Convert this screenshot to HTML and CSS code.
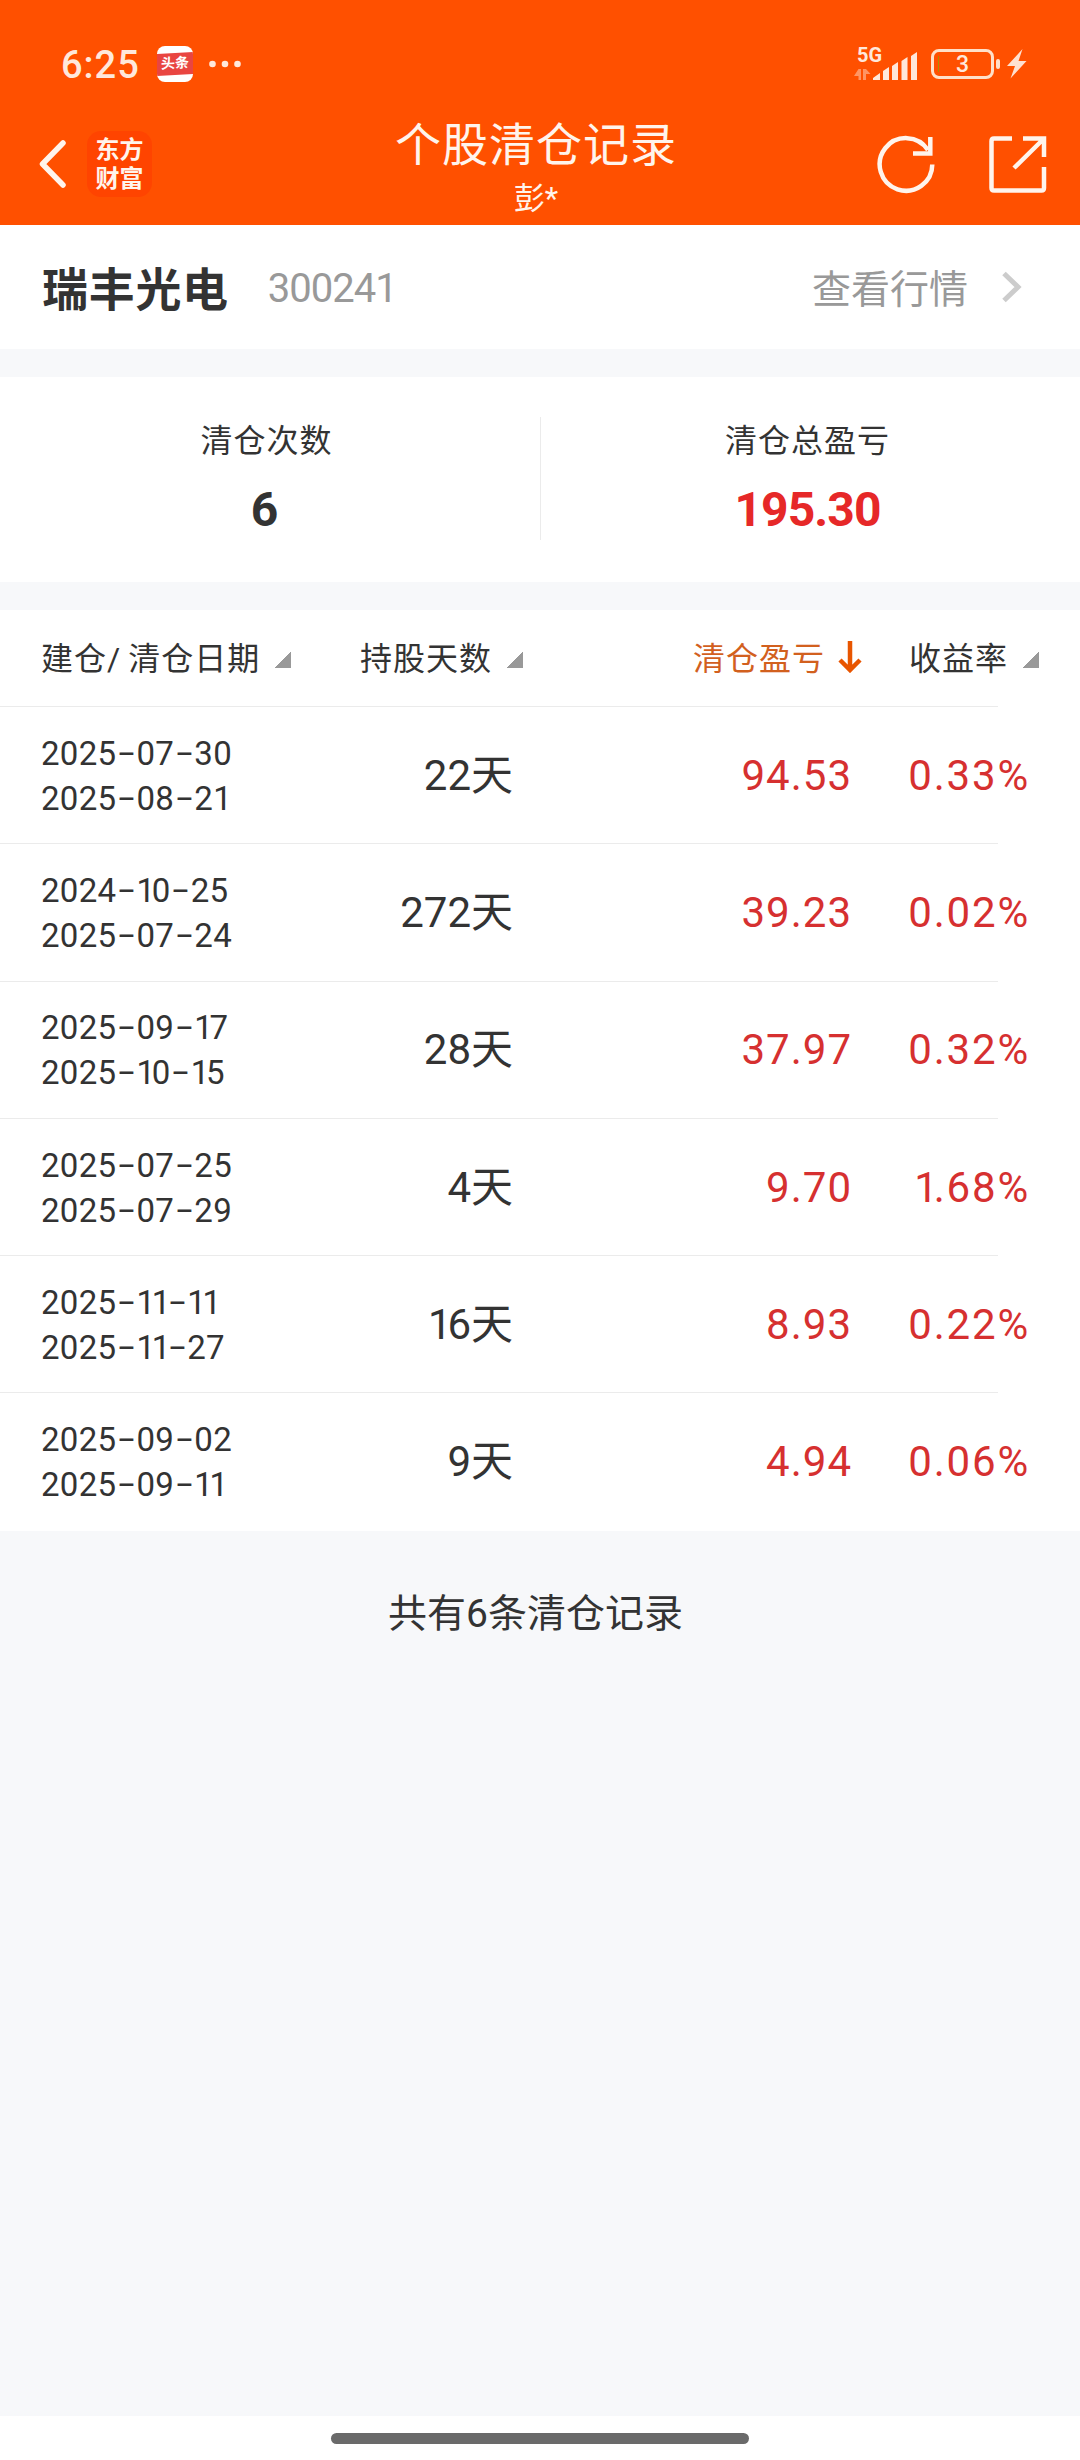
FILE: index.html
```
<!DOCTYPE html>
<html lang="zh-CN">
<head>
	<meta charset="UTF-8">
	<title>个股清仓记录</title>
	<link rel="stylesheet" href="styles.css">
</head>
<body>
	<div id="header">
		<div class="status">
			<span class="time">6:25</span>
			<span class="app"><b>头条</b></span>
			<svg class="dots" width="32" height="8" viewBox="0 0 32 8" fill="#ffe8db">
				<circle cx="3.5" cy="4" r="3.3"/><circle cx="16" cy="4" r="3.3"/><circle cx="28.5" cy="4" r="3.3"/>
			</svg>
			<div class="signal">
				<span class="net">5G</span>
				<svg width="64" height="34" viewBox="0 0 64 34" fill="#ffe8db">
					<path opacity=".45" d="M4.500 22H7V33H4.500V29H0zM9 22h3l4.500 5H12v6H9z"/>
					<path d="M19 33v-2l7-5v7zM29 33v-9l6-4v13zM38 33v-14l6-4v18zM47.500 33v-19l6-4v23zM57 33v-24l6-4v28z"/>
				</svg>
			</div>
			<div class="battery">3</div>
			<svg class="bolt" width="20" height="30" viewBox="0 0 20 30" fill="#ffe0d0">
				<path d="M15.500 0L0 17h8L3.500 29.500L19.500 12h-8z"/>
			</svg>
		</div>
		<div class="bar">
			<svg class="back" width="30" height="50" viewBox="0 0 30 50">
				<path d="M25 4L4.500 25L25 46" fill="none" stroke="#fff4ec" stroke-width="5.500" stroke-linecap="round" stroke-linejoin="round"/>
			</svg>
			<div class="logo">东方<br>财富</div>
			<div class="title">
				<h1>个股清仓记录</h1>
				<p>彭*</p>
			</div>
			<svg class="refresh" width="60" height="60" viewBox="0 0 60 60" fill="none" stroke="#fff4ec" stroke-width="4.500">
				<path d="M56.300 30.500A26.300 26.300 0 1 1 52 16"/>
				<path d="M54.300 3V19.500H37"/>
			</svg>
			<svg class="share" width="60" height="60" viewBox="0 0 60 60" fill="none" stroke="#fff4ec" stroke-width="4.500">
				<path d="M25 4.500H7Q4.500 4.500 4.500 7V54Q4.500 56.500 7 56.500H54.500Q57 56.500 57 54V33"/>
				<path d="M36 4.500H57V23M56 5.500L27 34"/>
			</svg>
		</div>
	</div>

	<div id="stock">
		<b>瑞丰光电</b>
		<span class="code">300241</span>
		<span class="link">查看行情</span>
		<svg width="22" height="32" viewBox="0 0 22 32"><path d="M3 2.500L17 16L3 29.500" fill="none" stroke="#ccc" stroke-width="5"/></svg>
	</div>

	<div id="summary">
		<div class="item"><p>清仓次数</p><b>6</b></div>
		<div class="item"><p>清仓总盈亏</p><b class="red">195.30</b></div>
	</div>

	<div id="list">
		<div class="row head">
			<div class="date">建仓/ 清仓日期<i class="tri"></i></div>
			<div class="days">持股天数<i class="tri"></i></div>
			<div class="profit active">清仓盈亏<svg width="24" height="32" viewBox="0 0 24 32"><path d="M12 0V28M2 19L12 29L22 19" fill="none" stroke="#e85500" stroke-width="4.500"/></svg></div>
			<div class="rate">收益率<i class="tri"></i></div>
		</div>
		<div class="row">
			<div class="date">2025<i>-</i>07<i>-</i>30<br>2025<i>-</i>08<i>-</i>21</div>
			<div class="days">22天</div><div class="profit">94.53</div><div class="rate">0.33%</div>
		</div>
		<div class="row">
			<div class="date">2024<i>-</i><em>1</em>0<i>-</i>25<br>2025<i>-</i>07<i>-</i>24</div>
			<div class="days">272天</div><div class="profit">39.23</div><div class="rate">0.02%</div>
		</div>
		<div class="row">
			<div class="date">2025<i>-</i>09<i>-</i><em>1</em>7<br>2025<i>-</i><em>1</em>0<i>-</i><em>1</em>5</div>
			<div class="days">28天</div><div class="profit">37.97</div><div class="rate">0.32%</div>
		</div>
		<div class="row">
			<div class="date">2025<i>-</i>07<i>-</i>25<br>2025<i>-</i>07<i>-</i>29</div>
			<div class="days">4天</div><div class="profit">9.70</div><div class="rate"><em>1</em>.68%</div>
		</div>
		<div class="row">
			<div class="date">2025<i>-</i><em>11</em><i>-</i><em>11</em><br>2025<i>-</i><em>11</em><i>-</i>27</div>
			<div class="days"><em>1</em>6天</div><div class="profit">8.93</div><div class="rate">0.22%</div>
		</div>
		<div class="row">
			<div class="date">2025<i>-</i>09<i>-</i>02<br>2025<i>-</i>09<i>-</i><em>11</em></div>
			<div class="days">9天</div><div class="profit">4.94</div><div class="rate">0.06%</div>
		</div>
	</div>

	<div id="total">共有6条清仓记录</div>
	<div id="home"><span></span></div>
</body>
</html>
```
FILE: styles.css
```
*{
	box-sizing: border-box;
	margin: 0;
	padding: 0;
}

body{
	display: flex;
	flex-direction: column;
	height: 2460px;
	background: #f7f8fa;
	color: #333;
	font-family: Roboto, "Noto Sans CJK SC", sans-serif;
	white-space: nowrap;
}

svg{
	display: block;
	flex: none;
}

i, em{
	font-style: normal;
}

/* header */
#header{
	height: 225px;
	background: #ff5000;
	color: #fff4ec;
}

#header .status{
	display: flex;
	align-items: center;
	height: 128px;
	padding: 0 53px 0 61px;
}

#header .time{
	width: 96px;
	padding-top: 2px;
	color: #ffe8db;
	font-size: 38px;
	font-weight: 500;
	letter-spacing: 1px;
}

#header .app{
	display: flex;
	align-items: center;
	width: 36px;
	height: 36px;
	overflow: hidden;
	border-radius: 8px;
	background: #fff;
}

#header .app b{
	width: 36px;
	height: 22px;
	background: #e94541;
	color: #fff;
	font-size: 14px;
	line-height: 21px;
	text-align: center;
	transform: skewY(-3deg);
}

#header .dots{
	margin-left: 16px;
}

#header .signal{
	position: relative;
	margin-left: auto;
}

#header .net{
	position: absolute;
	left: 3px;
	top: -4px;
	color: #ffe8db;
	font-size: 20px;
	font-weight: 700;
	line-height: 24px;
}

#header .battery{
	position: relative;
	width: 63px;
	height: 30px;
	margin: 0 13px 0 13px;
	border: 3px solid #ffe0c8;
	border-radius: 8px;
	color: #ffe8db;
	font-size: 23px;
	font-weight: 500;
	line-height: 26px;
	text-align: center;
}

#header .battery:before{
	content: "";
	position: absolute;
	left: 4px;
	top: 4px;
	width: 1px;
	height: 16px;
	background: #b08a00;
}

#header .battery:after{
	content: "";
	position: absolute;
	right: -9px;
	top: 7px;
	width: 4px;
	height: 10px;
	border-radius: 2px;
	background: #ffe0c8;
}

#header .bar{
	display: flex;
	align-items: center;
	height: 72px;
	padding: 0 33px 0 38px;
}

#header .logo{
	width: 65px;
	height: 66px;
	margin-left: 19px;
	padding-top: 5px;
	border-radius: 14px;
	background: #ff4400;
	font-size: 24px;
	font-weight: 700;
	line-height: 29px;
	text-align: center;
}

#header .title{
	width: 280px;
	margin: 0 auto 0 243px;
	padding-top: 11px;
	text-align: center;
}

#header h1{
	font-size: 46px;
	font-weight: 400;
	line-height: 58px;
	letter-spacing: 1px;
}

#header p{
	padding-left: 2px;
	font-size: 31px;
	line-height: 49px;
}

#header .share{
	margin-left: 51px;
}

/* stock name */
#stock{
	display: flex;
	align-items: center;
	height: 124px;
	padding: 0 57px 2px 42px;
	background: #fff;
	color: #999;
	font-size: 39px;
}

#stock b{
	color: #333;
	font-size: 46px;
	letter-spacing: .7px;
}

#stock .code{
	margin-left: 39px;
	padding-top: 4px;
	font-size: 40px;
	letter-spacing: -1px;
}

#stock .link{
	margin: 0 33px 0 auto;
}

#stock svg{
	margin-top: 2px;
}

/* summary */
#summary{
	display: flex;
	height: 205px;
	margin: 28px 0;
	padding: 40px 0 42px;
	background: #fff;
	text-align: center;
}

#summary .item{
	width: 540px;
	padding: 2px 7px 0 0;
}

#summary .item:first-child b{
	margin-right: 4px;
}

#summary .item + .item{
	padding-right: 6px;
	border-left: 1px solid #ebebeb;
}

#summary p{
	font-size: 32px;
	line-height: 44px;
	letter-spacing: 1px;
}

#summary b{
	font-size: 48px;
	line-height: 94px;
}

#summary .red{
	color: #e62828;
	letter-spacing: -.9px;
}

/* records */
#list{
	background: #fff;
}

#list .row{
	display: grid;
	grid-template-columns: 319px 194px 339px 1fr;
	align-items: center;
	height: 137.3px;
	padding-right: 50px;
	background: linear-gradient(#ebebeb, #ebebeb) no-repeat 0 100% / 998px 1px;
	font-size: 42px;
	line-height: 50px;
	text-align: right;
}

#list .row:last-child{
	background: none;
}

#list .date{
	padding-left: 41px;
	font-size: 33px;
	line-height: 45px;
	letter-spacing: .3px;
	text-align: left;
}

/* wide dash between the date parts */
#list .row .date i:not(.tri){
	display: inline-block;
	margin: 0 5.5px;
	letter-spacing: 0;
	transform: translateY(-1px) scaleX(1.75);
}

/* narrow ones */
#list em{
	letter-spacing: -.1em;
}

#list .profit,
#list .rate{
	color: #d63030;
	letter-spacing: 1px;
}

#list .rate{
	letter-spacing: 1.8px;
}

#list .head{
	height: 97px;
	padding-right: 41px;
	grid-template-columns: 319px 204px 339px 1fr;
}

#list .head div{
	display: flex;
	align-items: center;
	justify-content: flex-end;
	color: #333;
	font-size: 32px;
	line-height: 46px;
	letter-spacing: 1px;
}

#list .head .date{
	justify-content: flex-start;
	white-space: pre;
	word-spacing: -2px;
}

#list .head .active{
	color: #d2601e;
}

#list .head svg{
	margin: -4px 0 0 13px;
}

#list .tri{
	width: 16px;
	height: 16px;
	margin: 3px 0 0 15px;
	background: linear-gradient(135deg, transparent 50%, #999 50%);
}

/* footer */
#total{
	padding: 53px 9px 0 0;
	font-size: 39px;
	line-height: 60px;
	text-align: center;
}

#home{
	height: 44px;
	margin-top: auto;
	padding-top: 17px;
	background: #fff;
}

#home span{
	display: block;
	width: 418px;
	height: 11px;
	margin: 0 auto;
	border-radius: 6px;
	background: #6a6a6a;
}
```
